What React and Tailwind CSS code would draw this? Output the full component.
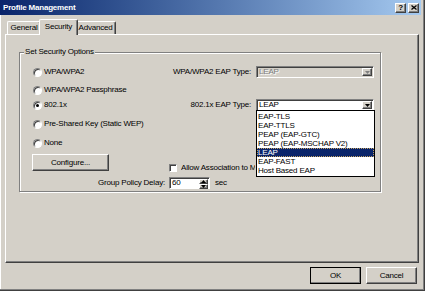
import React from 'react';

const raised = 'bg-[#d4d0c8] border border-t-white border-l-white border-r-[#404040] border-b-[#404040] shadow-[inset_-1px_-1px_0_#808080]';
const sunken = 'border border-t-[#808080] border-l-[#808080] border-r-white border-b-white shadow-[inset_1px_1px_0_#404040]';

const Radio = ({ checked, label }) => (
    <div className="flex items-center">
        <div className={`w-[9px] h-[9px] rounded-full bg-white flex items-center justify-center ${sunken}`}>
            {checked && <div className="w-[3px] h-[3px] rounded-full bg-black" />}
        </div>
        <span className="ml-[2px]">{label}</span>
    </div>
);

const Arrow = ({ disabled }) => (
    <div className={`w-[10px] h-full flex items-center justify-center ${raised}`}>
        <svg width="5" height="3" viewBox="0 0 5 3">
            <path d="M0 0h5L2.5 3z" fill={disabled ? '#808080' : '#000'} />
        </svg>
    </div>
);

const eapTypes = ['EAP-TLS', 'EAP-TTLS', 'PEAP (EAP-GTC)', 'PEAP (EAP-MSCHAP V2)', 'LEAP', 'EAP-FAST', 'Host Based EAP'];

export default function App() {
    return (
        <div className="w-[425px] h-[291px] bg-[#d4d0c8] flex flex-col pr-[3px] pb-[3px] border-r border-b border-[#404040] shadow-[inset_-1px_-1px_0_#808080,inset_1px_0_0_#fff] font-['Liberation_Sans',Arial,sans-serif] text-[8px] tracking-[-0.2px] leading-none text-black">
            {/* title bar */}
            <div className="h-[15px] shrink-0 flex items-center pl-[3px] pr-[2px] bg-linear-to-r from-[#0a246a] to-[#a6caf0] text-white font-bold">
                <span>Profile Management</span>
                <div className="ml-auto flex gap-[2px] text-black">
                    <div className={`w-[11px] h-[10px] flex items-center justify-center font-bold text-[8px] ${raised}`}>?</div>
                    <div className={`w-[11px] h-[10px] flex items-center justify-center ${raised}`}>
                        <svg width="6" height="5" viewBox="0 0 6 5">
                            <path d="M0.5 0.5L5.5 4.5M5.5 0.5L0.5 4.5" stroke="#000" strokeWidth="1.3" />
                        </svg>
                    </div>
                </div>
            </div>

            <div className="flex-1 flex flex-col pl-[5px] mr-[2px]">
                {/* tabs */}
                <div className="mt-[4px] h-[15px] shrink-0 flex items-end pl-[2px]">
                    <div className="w-[34px] h-[13px] flex items-center justify-center border-l border-t border-white border-r border-r-[#404040] rounded-t-[2px] shadow-[inset_-1px_0_0_#808080]">General</div>
                    <div className="relative z-10 -mx-[2px] -mb-px w-[39px] h-[16px] bg-[#d4d0c8] flex items-start pt-[3px] justify-center border-l border-t border-white border-r border-r-[#404040] rounded-t-[2px] shadow-[inset_-1px_0_0_#808080]">Security</div>
                    <div className="w-[40px] h-[13px] flex items-center justify-center border-t border-white border-r border-r-[#404040] rounded-t-[2px] shadow-[inset_-1px_0_0_#808080]">Advanced</div>
                </div>

                {/* tab panel */}
                <div className="h-[229px] shrink-0 border-l border-t border-white border-r border-b border-r-[#404040] border-b-[#404040] shadow-[inset_-1px_-1px_0_#808080] pl-[13px] pt-[17px]">
                    <div className="relative w-[362px] h-[140px] border border-[#808080] shadow-[inset_1px_1px_0_#fff,1px_1px_0_#fff] pl-[13px] pt-[13px] flex flex-col">
                        <span className="absolute -top-[5px] left-[4px] px-[1px] bg-[#d4d0c8]">Set Security Options</span>

                        <div className="h-[12px] flex items-center">
                            <div className="w-[101px]"><Radio label="WPA/WPA2" /></div>
                            <div className="w-[117px] text-right">WPA/WPA2 EAP Type:</div>
                            <div className={`ml-[5px] w-[118px] h-[12px] bg-[#d4d0c8] flex items-center pl-[2px] pr-px py-px ${sunken}`}>
                                <span className="flex-1 text-[#808080] [text-shadow:1px_1px_0_#fff]">LEAP</span>
                                <Arrow disabled />
                            </div>
                        </div>

                        <div className="mt-[7px] h-[10px] flex items-center">
                            <Radio label="WPA/WPA2 Passphrase" />
                        </div>

                        <div className="mt-[4px] h-[12px] flex items-center">
                            <div className="w-[101px]"><Radio checked label="802.1x" /></div>
                            <div className="w-[117px] text-right">802.1x EAP Type:</div>
                            <div className={`relative ml-[5px] w-[118px] h-[12px] bg-white flex items-center pl-[2px] pr-px py-px ${sunken}`}>
                                <span className="flex-1">LEAP</span>
                                <Arrow />
                                <div className="absolute z-20 -left-px top-full w-[119px] bg-white border border-black py-px">
                                    {eapTypes.map((t) => (
                                        <div
                                            key={t}
                                            className={`h-[9px] leading-[9px] px-[1px] ${t === 'LEAP' ? 'bg-[#0a246a] text-white outline-1 outline-dotted outline-[#c0a060] -outline-offset-1' : ''}`}
                                        >
                                            {t}
                                        </div>
                                    ))}
                                </div>
                            </div>
                        </div>

                        <div className="mt-[8px] h-[10px] flex items-center">
                            <Radio label="Pre-Shared Key (Static WEP)" />
                        </div>

                        <div className="mt-[9px] h-[10px] flex items-center">
                            <Radio label="None" />
                        </div>

                        <div className="mt-[6px] flex items-end">
                            <button className={`-ml-px w-[77px] h-[17px] flex items-center justify-center ${raised}`}>Configure...</button>
                            <div className="ml-[60px] -mb-px flex items-center whitespace-nowrap">
                                <div className={`w-[8px] h-[8px] bg-white ${sunken}`} />
                                {/* label is cut off where the open list covers it */}
                                <span className="ml-[4px] w-[74px] overflow-hidden">Allow Association to Mixed Cells</span>
                            </div>
                        </div>

                        <div className="mt-[6px] h-[12px] flex items-center">
                            <div className="w-[132px] text-right">Group Policy Delay:</div>
                            <div className={`ml-[4px] w-[41px] h-[12px] bg-white flex items-center pl-[2px] pr-px py-px ${sunken}`}>
                                <span className="flex-1">60</span>
                                <div className="w-[9px] h-full flex flex-col">
                                    <div className={`flex-1 flex items-center justify-center ${raised}`}>
                                        <svg width="5" height="3" viewBox="0 0 5 3"><path d="M0 3h5L2.5 0z" fill="#000" /></svg>
                                    </div>
                                    <div className={`flex-1 flex items-center justify-center ${raised}`}>
                                        <svg width="5" height="3" viewBox="0 0 5 3"><path d="M0 0h5L2.5 3z" fill="#000" /></svg>
                                    </div>
                                </div>
                            </div>
                            <span className="ml-[5px]">sec</span>
                        </div>
                    </div>
                </div>

                {/* dialog buttons */}
                <div className="mt-[4px] h-[17px] shrink-0 flex justify-end gap-[5px] mr-[2px]">
                    <button className={`w-[51px] h-[17px] flex items-center justify-center outline outline-1 outline-black -outline-offset-1 ${raised}`}>OK</button>
                    <button className={`w-[51px] h-[17px] flex items-center justify-center ${raised}`}>Cancel</button>
                </div>
            </div>
        </div>
    );
}
